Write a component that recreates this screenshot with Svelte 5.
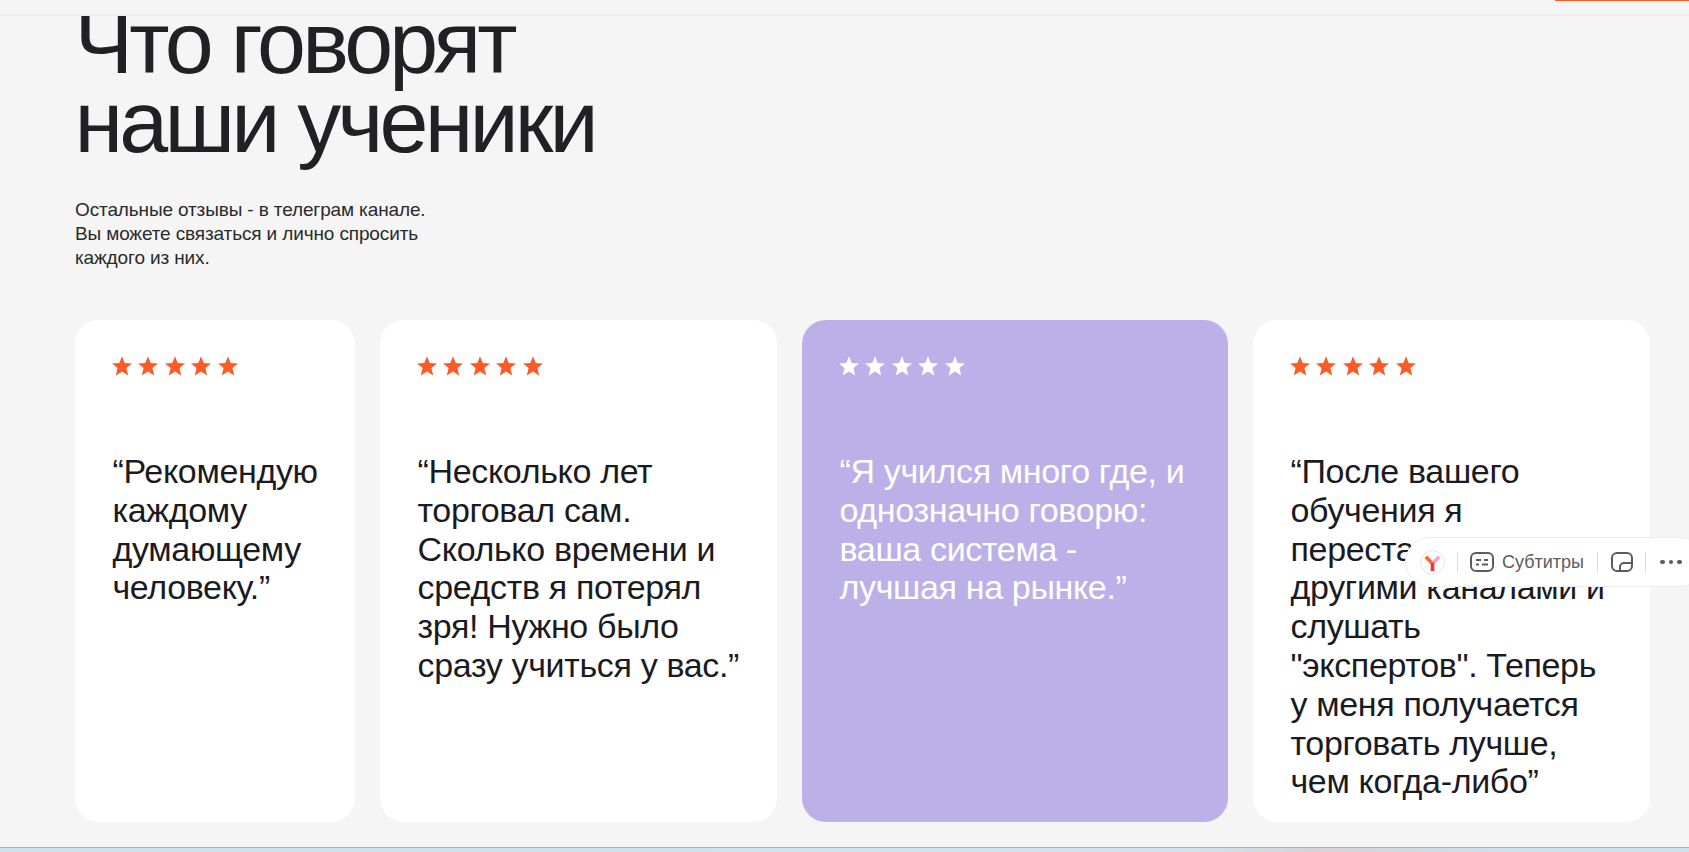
<script>
  const star = "10,0.2 12.7,7 20,7.5 14.4,12.1 16.2,19.4 10,15.4 3.800,19.4 5.600,12.1 0,7.5 7.300,7";
  const cards = [
    { text: "“Рекомендую\nкаждому\nдумающему\nчеловеку.”" },
    { text: "“Несколько лет\nторговал сам.\nСколько времени и\nсредств я потерял\nзря! Нужно было\nсразу учиться у вас.”" },
    { text: "“Я учился много где, и\nоднозначно говорю:\nваша система -\nлучшая на рынке.”", accent: true },
    { text: "“После вашего\nобучения я\nперестал следить за\nдругими каналами и\nслушать\n\"экспертов\". Теперь\nу меня получается\nторговать лучше,\nчем когда-либо”" }
  ];
</script>

<div class="page">
  <header class="top"><span class="progress"></span></header>
  <main class="content">
    <h1>Что говорят<br />наши ученики</h1>
    <p class="lead">Остальные отзывы - в телеграм канале.<br />Вы можете связаться и лично спросить<br />каждого из них.</p>
    <section class="cards">
      {#each cards as c}
        <article class="card" class:accent={c.accent}>
          <div class="stars">
            {#each [1, 2, 3, 4, 5] as s (s)}
              <svg viewBox="0 0 20 20" width="20" height="20"><polygon points={star} /></svg>
            {/each}
          </div>
          <p class="quote">{c.text}</p>
        </article>
      {/each}
    </section>
  </main>
  <div class="strip"></div>

  <div class="yabar">
    <svg class="logo" viewBox="0 0 26 26" width="25" height="25">
      <circle cx="13" cy="13" r="12.300" fill="#fff" stroke="#e3e3e3" />
      <path d="M13.500 14.500 L6 7" stroke="#ff6a20" stroke-width="3.800" fill="none" />
      <path d="M12.500 14.500 L20 7" stroke="#f9a0cf" stroke-width="3.800" fill="none" />
      <path d="M13 13 V22" stroke="#f5333f" stroke-width="3.800" fill="none" />
    </svg>
    <span class="sep first"></span>
    <svg class="ic" viewBox="0 0 24 20" width="24" height="20" fill="none" stroke="#5c5c5c" stroke-width="2">
      <rect x="1" y="1" width="22" height="18" rx="5" />
      <path d="M6 8h5M14 8h4M6 12.500h3M12 12.500h6" stroke-width="1.800" />
    </svg>
    <span class="sub">Субтитры</span>
    <span class="sep"></span>
    <svg class="ic" viewBox="0 0 22 20" width="22" height="20" fill="none" stroke="#5c5c5c" stroke-width="2">
      <rect x="1" y="1" width="20" height="18" rx="5" />
      <path d="M9 19v-4a4 4 0 0 1 4-4h8" />
    </svg>
    <span class="sep"></span>
    <span class="dots"><i></i><i></i><i></i></span>
  </div>
</div>

<style>
  :global(body) {
    margin: 0;
    background: #f5f5f5;
    font-family: "Liberation Sans", Arial, sans-serif;
  }
  .page {
    position: relative;
    height: 852px;
    overflow: hidden;
    display: flex;
    flex-direction: column;
    background: #f5f5f5;
  }
  .top {
    position: relative;
    z-index: 1;
    flex: none;
    height: 14px;
    border-bottom: 2px solid #ededed;
    background: #f5f5f5;
    display: flex;
    justify-content: flex-end;
    align-items: flex-start;
  }
  .progress {
    width: 134px;
    height: 1px;
    background: #ff5a26;
  }
  .content {
    flex: 1;
    min-height: 0;
    padding: 0 38px 0 75px;
  }
  h1 {
    margin: -13px 0 0 -0.500px;
    font-size: 88px;
    line-height: 79px;
    font-weight: 400;
    letter-spacing: -3.800px;
    color: #212124;
  }
  .lead {
    margin: 37px 0 0;
    font-size: 19px;
    line-height: 24px;
    letter-spacing: -0.130px;
    color: #2a2a2c;
  }
  .cards {
    margin-top: 50px;
    display: grid;
    grid-template-columns: 280px 397px 426px 397px;
    gap: 25px;
  }
  .card {
    height: 502px;
    box-sizing: border-box;
    padding: 36px 37.500px 0;
    background: #fff;
    border-radius: 24px;
    color: #1b1b1f;
  }
  .card.accent {
    background: #bbb1e8;
    color: #fff;
  }
  .stars {
    display: flex;
    gap: 6.400px;
    height: 20px;
    margin-left: -0.500px;
    fill: #ff5a26;
  }
  .accent .stars {
    fill: #fff;
  }
  .stars svg {
    display: block;
  }
  .quote {
    margin: 76px 0 0;
    font-size: 34px;
    line-height: 38.800px;
    letter-spacing: -0.340px;
    white-space: pre-line;
  }
  .strip {
    flex: none;
    height: 4px;
    border-top: 1px solid #a3b1c0;
    background: linear-gradient(90deg, #cfe0ea, #d3e2ea 70%, #d6d3d6 78%, #cfe0ea 90%);
  }
  .yabar {
    position: absolute;
    left: 1405px;
    top: 537px;
    width: 300px;
    height: 50px;
    box-sizing: border-box;
    padding-left: 14px;
    display: flex;
    align-items: center;
    background: #fff;
    border: 1px solid #ececec;
    border-radius: 25px;
    color: #5c5c5c;
  }
  .sep {
    flex: none;
    width: 1px;
    height: 21px;
    margin: 0 13px 0 12px;
    background: #dcdcdc;
  }
  .sep.first {
    margin-right: 12px;
  }
  .sub {
    margin-left: 8px;
    margin-right: 1px;
    font-size: 18px;
  }
  .dots {
    display: flex;
    gap: 4px;
    margin-left: 1px;
  }
  .dots i {
    width: 4.500px;
    height: 4.500px;
    border-radius: 50%;
    background: #5c5c5c;
  }
</style>
